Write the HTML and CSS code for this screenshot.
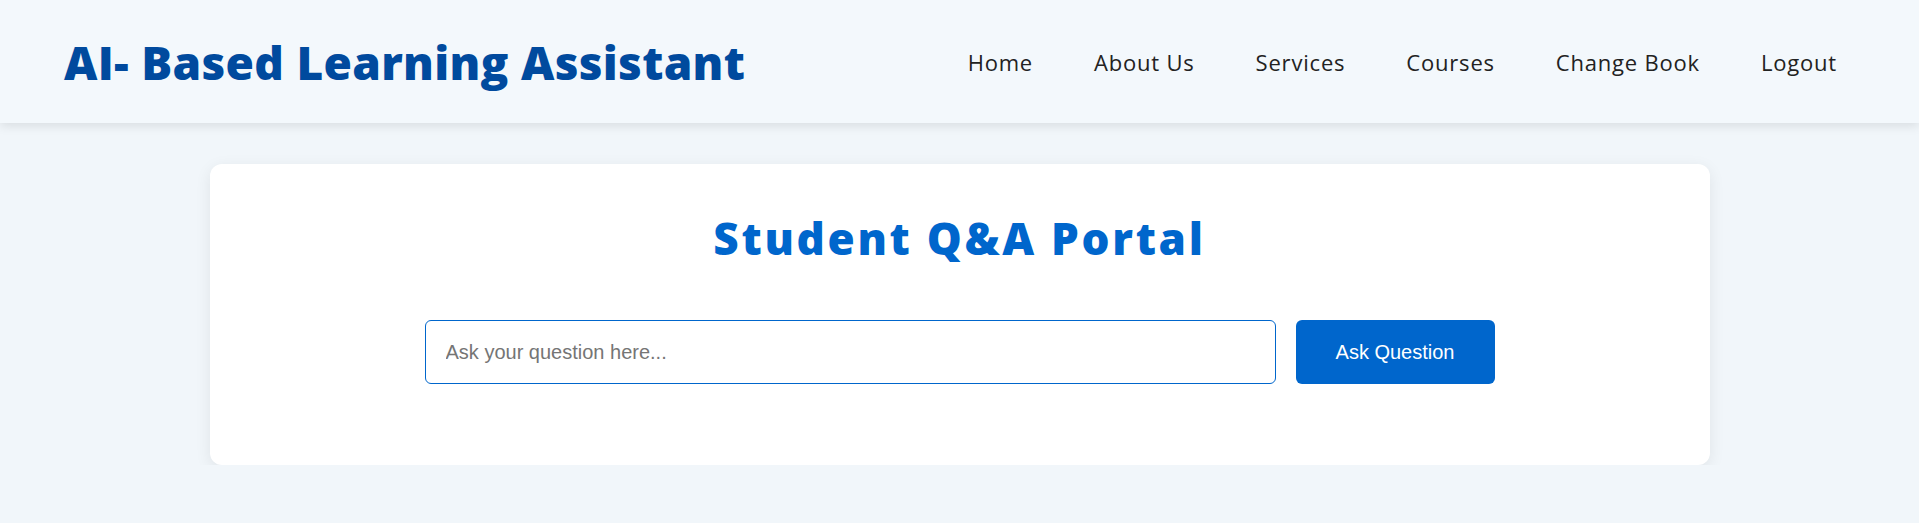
FILE: index.html
```html
<!DOCTYPE html>
<html lang="en">
<head>
<meta charset="utf-8">
<title>AI- Based Learning Assistant</title>
<link rel="stylesheet" href="styles.css">
</head>
<body>
<header class="site-header">
  <div class="brand">AI- Based Learning Assistant</div>
  <nav class="main-nav">
    <a href="#">Home</a>
    <a href="#">About Us</a>
    <a href="#">Services</a>
    <a href="#">Courses</a>
    <a href="#">Change Book</a>
    <a href="#">Logout</a>
  </nav>
</header>
<main class="page">
  <section class="card">
    <h2 class="card-title">Student Q&amp;A Portal</h2>
    <form class="ask-form">
      <input class="ask-input" type="text" placeholder="Ask your question here...">
      <button class="ask-btn" type="button">Ask Question</button>
    </form>
  </section>
</main>
</body>
</html>
```
FILE: styles.css
```css
* { box-sizing: border-box; }
body {
  margin: 0;
  background: #f1f6fa;
  font-family: "Open Sans", "Liberation Sans", sans-serif;
}
.site-header {
  height: 123px;
  display: flex;
  align-items: center;
  justify-content: space-between;
  padding: 0 82px 0 64px;
  background: #f3f8fc;
  box-shadow: 0 3px 10px rgba(0, 0, 0, 0.1);
}
.brand {
  font-family: "Open Sans", sans-serif;
  font-weight: 800;
  font-size: 46px;
  color: #004a9e;
  letter-spacing: 0.3px;
}
.main-nav {
  display: flex;
  gap: 61px;
}
.main-nav a {
  font-family: "Open Sans", sans-serif;
  font-weight: 500;
  font-size: 22px;
  letter-spacing: 0.8px;
  color: #222;
  text-decoration: none;
}
.page {
  padding-top: 41px;
}
.card {
  width: 1500px;
  margin: 0 auto;
  background: #fff;
  border-radius: 12px;
  box-shadow: 0 4px 16px rgba(0, 0, 0, 0.08);
  padding: 44px 0 81px;
}
.card-title {
  margin: 0 0 52px;
  text-align: center;
  font-family: "Open Sans", sans-serif;
  font-weight: 800;
  font-size: 44px;
  letter-spacing: 2.7px;
  color: #0066cc;
}
.ask-form {
  width: 1070px;
  margin: 0 auto;
  display: flex;
  gap: 20px;
}
.ask-input {
  flex: 1;
  height: 64px;
  padding: 0 20px;
  border: 1px solid #0066cc;
  border-radius: 6px;
  font-family: "Liberation Sans", Arial, sans-serif;
  font-size: 20px;
  color: #333;
  outline: none;
}
.ask-input::placeholder { color: #757575; }
.ask-btn {
  height: 64px;
  padding: 0 40px;
  border: none;
  border-radius: 6px;
  background: #0066cc;
  color: #fff;
  font-family: "Liberation Sans", Arial, sans-serif;
  font-size: 20px;
  cursor: pointer;
}
```
